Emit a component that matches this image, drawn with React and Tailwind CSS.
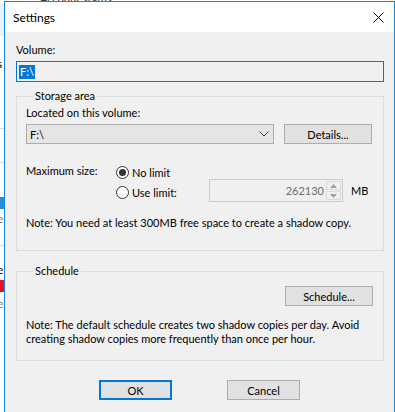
import React from "react";

const font = { fontFamily: 'Lato, "Liberation Sans", Arial, sans-serif' };

function Radio({ checked, label }) {
  return (
    <div className="flex h-[20px] items-center">
      <span className="flex h-[13px] w-[13px] items-center justify-center rounded-full border border-[#333333] bg-white">
        {checked && <span className="h-[7px] w-[7px] rounded-full bg-[#333333]" />}
      </span>
      <span className="ml-[3px]">{label}</span>
    </div>
  );
}

function Button({ children, primary, className = "" }) {
  return (
    <button
      className={
        "flex h-[20px] items-center justify-center bg-[#e1e1e1] text-[11px] text-black " +
        (primary ? "border-2 border-[#0078d7] " : "border border-[#adadad] ") +
        className
      }
    >
      {children}
    </button>
  );
}

function Background() {
  // the window that sits behind the dialog
  return (
    <div className="absolute inset-0 bg-white">
      <div className="absolute left-0 top-[3px] h-[33px] w-[4px] bg-[#e5f3ff]" />
      <div className="absolute left-[18px] top-0 h-[2px] w-[96px] border-l border-[#dcdcdc]" />
      <div className="absolute left-[40px] top-[-9px] text-[11px] text-[#333]">Account status</div>
      <div className="absolute left-[-3px] top-[56px] text-[12px] leading-[15px] text-black">s</div>
      <div className="absolute left-0 top-[128px] h-px w-[4px] bg-[#dcdcdc]" />
      <div className="absolute left-0 top-[162px] h-px w-[4px] bg-[#dcdcdc]" />
      <div className="absolute left-0 top-[197px] h-[12px] w-[4px] bg-[#1e90e0]" />
      <div className="absolute left-[-3px] top-[211px] text-[12px] leading-[15px] text-[#777]">e</div>
      <div className="absolute left-0 top-[245px] h-px w-[4px] bg-[#dcdcdc]" />
      <div className="absolute left-[-3px] top-[262px] text-[12px] leading-[15px] text-black">e</div>
      <div className="absolute left-0 top-[280px] h-[12px] w-[4px] bg-[#e81123]" />
      <div className="absolute left-[-3px] top-[296px] text-[12px] leading-[15px] text-[#777]">e</div>
    </div>
  );
}

export default function App() {
  return (
    <div className="relative h-[412px] w-[395px] overflow-hidden text-[11px] leading-[15px] text-black" style={font}>
      <Background />

      <div className="absolute left-[4px] top-[1px] h-[440px] w-[391px] border border-[#1883d7] bg-[#f0f0f0]">
        {/* title bar */}
        <div className="flex h-[30px] items-center justify-between bg-white pl-[8px] pr-[9px]">
          <span className="text-[12px]">Settings</span>
          <svg width="11" height="11" viewBox="0 0 11 11" className="mr-[1px]">
            <path d="M0.5 0.5 L10.5 10.5 M10.5 0.5 L0.5 10.5" stroke="#000" strokeWidth="1" />
          </svg>
        </div>

        <div className="flex flex-col pl-[11px] pr-[10px] pt-[10px]">
          <div>Volume:</div>
          <div className="mt-[4px] flex h-[21px] items-center border border-[#0078d7] bg-[#f0f0f0] px-[2px]">
            <span className="bg-[#0078d7] px-[1px] text-white leading-[14px]">F:\</span>
          </div>

          <fieldset className="mt-[7px] h-[162px] border border-[#dcdcdc] px-[9px]">
            <legend className="ml-[7px] px-[2px] leading-[14px]">Storage area</legend>
            <div className="mt-[2px]">Located on this volume:</div>
            <div className="mt-[4px] flex items-center">
              <div className="flex h-[20px] w-[248px] items-center justify-between border border-[#adadad] bg-[#e5e5e5] pl-[3px] pr-[4px]">
                <span>F:\</span>
                <svg width="10" height="6" viewBox="0 0 10 6">
                  <path d="M0.5 0.5 L5 5 L9.5 0.5" stroke="#333" strokeWidth="1" fill="none" />
                </svg>
              </div>
              <Button className="ml-[10px] w-[88px]">Details...</Button>
            </div>

            <div className="mt-[18px] flex">
              <div className="w-[90px] pt-[1px]">Maximum size:</div>
              <div className="flex w-[93px] flex-col">
                <Radio checked label="No limit" />
                <Radio label="Use limit:" />
              </div>
              <div className="mt-[17px] flex h-[23px] w-[134px] border border-[#cccccc] bg-[#f0f0f0]">
                <span className="flex flex-1 items-center justify-end pr-[2px] text-[#6d6d6d]">262130</span>
                <div className="flex w-[16px] flex-col gap-[1px] py-[1px] pr-[1px]">
                  <div className="flex flex-1 items-center justify-center border border-[#dadada] bg-[#f0f0f0]">
                    <svg width="7" height="4" viewBox="0 0 7 4"><path d="M0 4 L3.5 0 L7 4 Z" fill="#a0a0a0" /></svg>
                  </div>
                  <div className="flex flex-1 items-center justify-center border border-[#dadada] bg-[#f0f0f0]">
                    <svg width="7" height="4" viewBox="0 0 7 4"><path d="M0 0 L3.5 4 L7 0 Z" fill="#a0a0a0" /></svg>
                  </div>
                </div>
              </div>
              <div className="ml-[8px] mt-[21px]">MB</div>
            </div>

            <div className="mt-[13px] whitespace-nowrap">Note: You need at least 300MB free space to create a shadow copy.</div>
          </fieldset>

          <fieldset className="mt-[13px] h-[97px] border border-[#dcdcdc] px-[9px]">
            <legend className="ml-[7px] px-[2px] leading-[14px]">Schedule</legend>
            <div className="mt-[8px] flex justify-end pr-[1px]">
              <Button className="w-[88px]">Schedule...</Button>
            </div>
            <p className="mt-[12px] leading-[14px]">
              Note: The default schedule creates two shadow copies per day. Avoid<br />
              creating shadow copies more frequently than once per hour.
            </p>
          </fieldset>

          <div className="mt-[19px] flex pl-[83px]">
            <Button primary className="w-[73px]">OK</Button>
            <Button className="ml-[55px] w-[73px]">Cancel</Button>
          </div>
        </div>
      </div>
    </div>
  );
}
